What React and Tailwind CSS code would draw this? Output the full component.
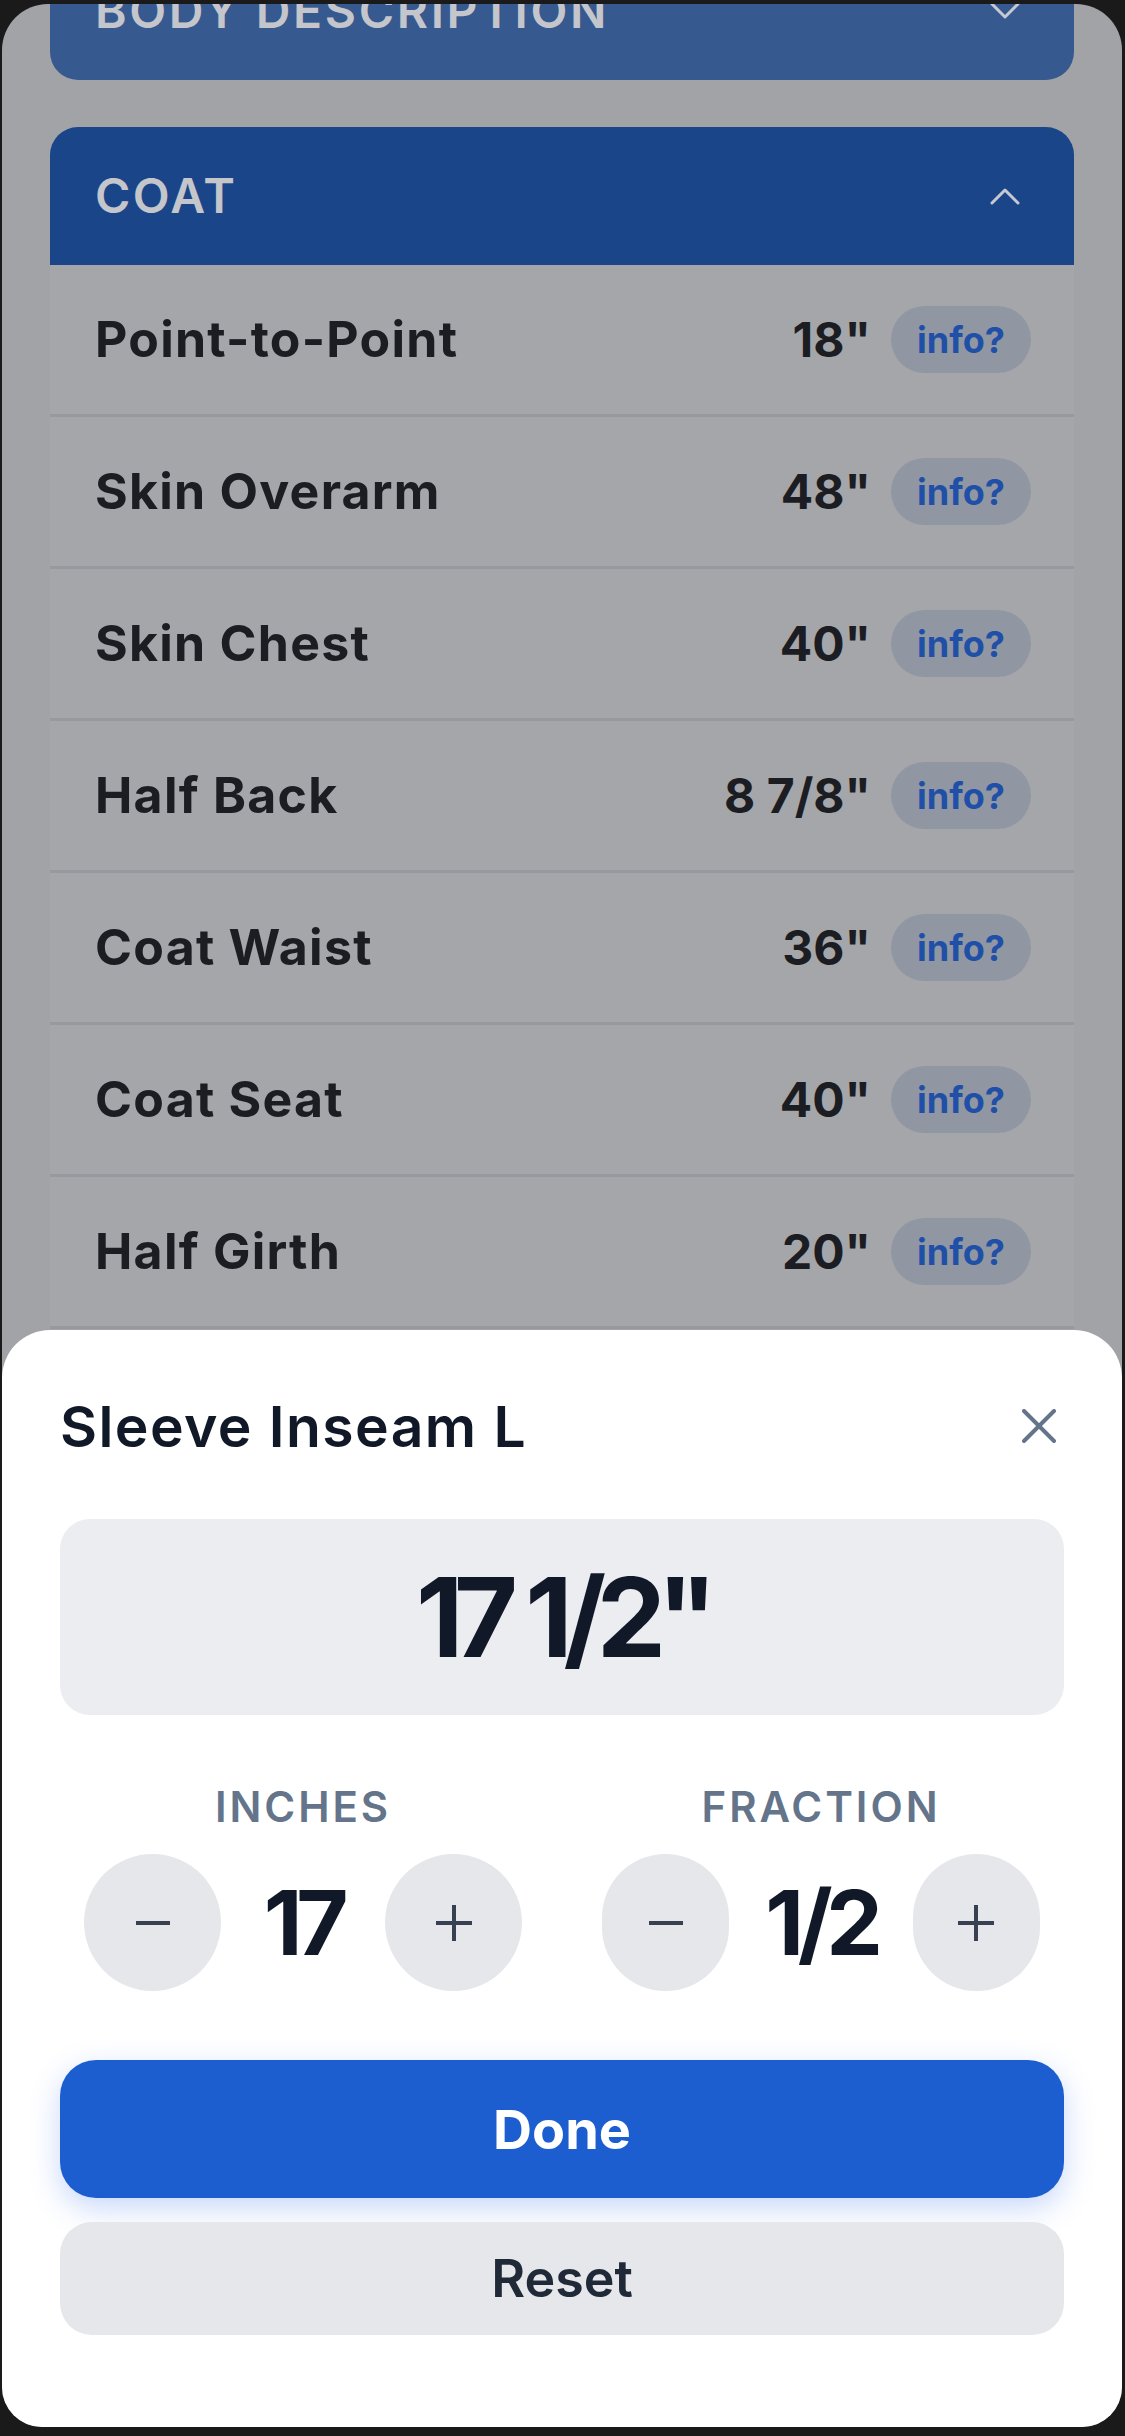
import React from "react";

const rows = [
  ["Point-to-Point", '18"'],
  ["Skin Overarm", '48"'],
  ["Skin Chest", '40"'],
  ["Half Back", '8 7/8"'],
  ["Coat Waist", '36"'],
  ["Coat Seat", '40"'],
  ["Half Girth", '20"'],
];

function Chevron({ up }) {
  return (
    <svg width="30" height="18" viewBox="0 0 30 18" fill="none" className="shrink-0">
      {up ? (
        <polyline points="2,16 15,3 28,16" stroke="#c6c9d1" strokeWidth="3" strokeLinecap="round" strokeLinejoin="round" />
      ) : (
        <polyline points="2,2 15,15 28,2" stroke="#c6c9d1" strokeWidth="3" strokeLinecap="round" strokeLinejoin="round" />
      )}
    </svg>
  );
}

function Stepper({ label, value }) {
  return (
    <div className="w-[438px] flex flex-col items-center">
      <div className="h-[50px] flex items-center text-[42px] font-semibold tracking-[0.07em] text-[#64748b] leading-none">
        {label}
      </div>
      <div className="mt-[22px] w-[438px] flex items-center gap-[36px]">
        <div className="w-[137px] h-[137px] shrink rounded-full bg-[#e5e7eb] flex items-center justify-center">
          <svg width="36" height="36" viewBox="0 0 36 36">
            <line x1="1" y1="18" x2="35" y2="18" stroke="#374151" strokeWidth="4" />
          </svg>
        </div>
        <div className="shrink-0 min-w-[92px] text-center text-[90px] font-bold tracking-[-0.07em] leading-none text-[#111827]">
          {value}
        </div>
        <div className="w-[137px] h-[137px] shrink rounded-full bg-[#e5e7eb] flex items-center justify-center">
          <svg width="36" height="36" viewBox="0 0 36 36">
            <line x1="0" y1="18" x2="36" y2="18" stroke="#374151" strokeWidth="4" />
            <line x1="18" y1="0" x2="18" y2="36" stroke="#374151" strokeWidth="4" />
          </svg>
        </div>
      </div>
    </div>
  );
}

export default function App() {
  return (
    <div className="w-[1125px] h-[2436px] bg-[#1a1a1a] pt-[4px] pl-[2px] pr-[3px] pb-[9px] font-[Inter,sans-serif]">
      <div className="relative w-full h-full rounded-t-[46px] rounded-b-[40px] overflow-hidden bg-[#a2a3a7]">
        {/* page content (scrolled) */}
        <div className="-mt-[62px] px-[48px] flex flex-col gap-[47px]">
          <div className="h-[138px] rounded-[28px] bg-[#365990] px-[45px] flex items-center justify-between">
            <span className="text-[48px] font-semibold tracking-[0.055em] text-[#c4c6cb]">BODY DESCRIPTION</span>
            <span className="mr-[9px]"><Chevron /></span>
          </div>
          <div className="rounded-t-[28px] overflow-hidden">
            <div className="h-[138px] bg-[#1b4589] px-[45px] flex items-center justify-between">
              <span className="text-[48px] font-semibold tracking-[0.05em] text-[#c4c6cb]">COAT</span>
              <span className="mr-[9px]"><Chevron up /></span>
            </div>
            {rows.map(([name, val]) => (
              <div
                key={name}
                className="h-[152px] bg-[#a5a6aa] border-b-[3px] border-[#98999e] pl-[45px] pr-[43px] flex items-center justify-between"
              >
                <span className="text-[50px] font-bold tracking-[0.025em] text-[#1b1d22]">{name}</span>
                <div className="flex items-center gap-[20px]">
                  <span className="text-[48px] font-bold text-[#1b1d22]">{val}</span>
                  <span className="w-[140px] h-[67px] rounded-full bg-[#9097a3] flex items-center justify-center text-[36px] font-bold text-[#1f4fa7]">
                    info?
                  </span>
                </div>
              </div>
            ))}
          </div>
        </div>

        {/* bottom sheet */}
        <div className="absolute left-0 right-0 bottom-0 h-[1097px] bg-white rounded-t-[48px] px-[58px] pt-[62px] flex flex-col">
          <div className="h-[68px] flex items-center justify-between">
            <span className="text-[57px] font-semibold tracking-[0.025em] text-[#111827] leading-none">Sleeve Inseam L</span>
            <svg width="34" height="34" viewBox="0 0 34 34" className="mr-[8px]">
              <line x1="2" y1="2" x2="32" y2="32" stroke="#64748b" strokeWidth="4" strokeLinecap="round" />
              <line x1="32" y1="2" x2="2" y2="32" stroke="#64748b" strokeWidth="4" strokeLinecap="round" />
            </svg>
          </div>
          <div className="mt-[59px] h-[196px] rounded-[30px] bg-[#ecedf1] flex items-center justify-center">
            <span className="text-[110px] font-bold tracking-[-0.085em] leading-none text-[#111827]">17 1/2"</span>
          </div>
          <div className="mt-[67px] px-[24px] flex justify-between">
            <Stepper label="INCHES" value="17" />
            <Stepper label="FRACTION" value="1/2" />
          </div>
          <button className="mt-[69px] h-[138px] rounded-[36px] bg-[#1c5ecf] shadow-[0_10px_30px_rgba(37,99,235,0.25)] text-white text-[54px] font-bold flex items-center justify-center">
            Done
          </button>
          <button className="mt-[24px] h-[113px] rounded-[32px] bg-[#e5e7eb] text-[#1f2937] text-[52px] font-semibold flex items-center justify-center">
            Reset
          </button>
        </div>
      </div>
    </div>
  );
}
